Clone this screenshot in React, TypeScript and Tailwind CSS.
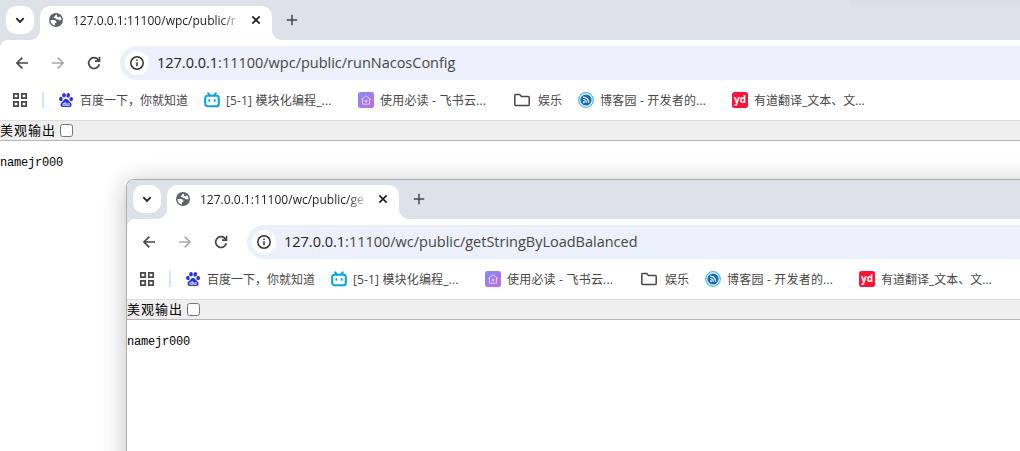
import type { ReactNode } from 'react';

interface BrowserWindowProps {
  title: string;
  path: string;
}

const GlobeIcon = () => (
  <svg className="h-4 w-4 shrink-0" viewBox="0 0 16 16">
    <circle cx="8" cy="8" r="7" fill="#5f6368" />
    <path
      d="M8.300 2.600C7 3 7.500 4 6.500 4.400c-.8.3-.9 1.300-.2 1.700.9.500 1.500 0 2 .9.500.9 2.100.2 2.900 1.100.6.700 1.500.3 2.300-.1A5.500 5.500 0 0 0 12 4.300c-.7 1-1.900 1.100-2.600.6-.6-.5-.2-1.600-1.100-2.300z"
      fill="#fff"
    />
    <path d="M2.500 8h3.400c1.500 0 2.600 1 2.600 2.300 0 .6-.5.900-1.600.9v2.200A5.500 5.500 0 0 1 2.500 8z" fill="#fff" />
  </svg>
);

const ChevronIcon = () => (
  <svg className="h-3 w-3" viewBox="0 0 12 12" fill="none" stroke="#1f1f1f" strokeWidth="1.8">
    <path d="M2.300 4.200 6 7.900l3.700-3.700" />
  </svg>
);

const CloseIcon = () => (
  <svg className="h-3 w-3" viewBox="0 0 12 12" fill="none" stroke="#1f1f1f" strokeWidth="1.7">
    <path d="m2.300 2.300 7.400 7.400M9.700 2.300 2.300 9.700" />
  </svg>
);

const PlusIcon = () => (
  <svg className="h-3 w-3" viewBox="0 0 12 12" fill="none" stroke="#474747" strokeWidth="1.500">
    <path d="M6 .8v10.400M.8 6h10.400" />
  </svg>
);

const BackIcon = () => (
  <svg className="h-4 w-4" viewBox="0 0 16 16" fill="none" stroke="#474747" strokeWidth="1.600">
    <path d="M14 8H3M8.300 2.600 2.900 8l5.400 5.400" />
  </svg>
);

const ForwardIcon = () => (
  <svg className="h-4 w-4" viewBox="0 0 16 16" fill="none" stroke="#a8a8a8" strokeWidth="1.600">
    <path d="M2 8h11M7.700 2.600 13.100 8l-5.400 5.400" />
  </svg>
);

const ReloadIcon = () => (
  <svg className="h-4 w-4" viewBox="0 0 16 16" fill="none" stroke="#474747" strokeWidth="1.700">
    <path d="M13.300 9.300A5.400 5.400 0 1 1 12.200 4.600L13.400 6" />
    <path d="M13.500 1.800V6.200H9" />
  </svg>
);

const InfoIcon = () => (
  <svg className="h-4 w-4" viewBox="0 0 16 16" fill="none" stroke="#303030" strokeWidth="1.500">
    <circle cx="8" cy="8" r="6.200" />
    <path d="M8 7.200v4M8 4.500v1.600" />
  </svg>
);

const AppsIcon = () => (
  <svg className="h-4 w-4" viewBox="0 0 16 16" fill="none" stroke="#474747" strokeWidth="1.700">
    <path d="M1.800 1.800h4.400v4.400H1.800zM9.800 1.800h4.400v4.400H9.800zM1.800 9.800h4.400v4.400H1.800zM9.800 9.800h4.400v4.400H9.800z" />
  </svg>
);

const BaiduIcon = () => (
  <svg className="h-4 w-4" viewBox="0 0 16 16">
    <g fill="#2932e1">
      <ellipse cx="2.900" cy="7" rx="1.800" ry="2.200" transform="rotate(-8 2.900 7)" />
      <ellipse cx="6" cy="3.300" rx="1.800" ry="2.300" />
      <ellipse cx="10.200" cy="3.400" rx="1.800" ry="2.300" transform="rotate(12 10.200 3.400)" />
      <ellipse cx="13.200" cy="7.100" rx="1.800" ry="2.200" />
      <path d="M8 6.700c1.600 0 2.300 1.700 3.400 2.700 1 .9 2.400 1.700 2.200 3.500-.3 2.500-3.100 2-5.600 2s-5.200.5-5.500-2c-.2-1.800 1.200-2.600 2.200-3.500C5.800 8.400 6.400 6.700 8 6.700z" />
    </g>
    <text x="4.300" y="13.600" fill="#fff" fontSize="6" fontWeight="bold" fontFamily="Liberation Sans, sans-serif">
      du
    </text>
  </svg>
);

const BilibiliIcon = () => (
  <svg className="h-4 w-4" viewBox="0 0 16 16" fill="none" stroke="#0aa5dc" strokeWidth="2.100" strokeLinecap="round">
    <rect x="1.200" y="3.700" width="13.600" height="10.500" rx="2.300" />
    <path d="m4.200 1.400 1.600 1.800M11.800 1.400l-1.600 1.800" />
    <path d="M5.300 8v.9M10.700 8v.9" strokeWidth="1.900" />
  </svg>
);

const FeishuIcon = () => (
  <svg className="h-4 w-4" viewBox="0 0 16 16" fill="none">
    <defs>
      <linearGradient id="feishu" x1="0" y1="0" x2="1" y2="1">
        <stop offset="0" stopColor="#858af8" />
        <stop offset="1" stopColor="#c06bea" />
      </linearGradient>
    </defs>
    <rect width="16" height="16" rx="2.500" fill="url(#feishu)" />
    <path d="M3.200 7.500 8 3.700l4.800 3.800M4.500 6.900v5.300h7V6.900M7.200 10V8.400h1.600V10z" stroke="#e9d9ff" strokeWidth=".9" />
  </svg>
);

const FolderIcon = () => (
  <svg className="h-4 w-4" viewBox="0 0 16 16" fill="none" stroke="#474747" strokeWidth="1.500">
    <path d="M.8 3.400c0-.5.3-.8.8-.8h4.100l1.700 1.800h7c.5 0 .8.3.8.8v7.400c0 .5-.3.800-.8.800H1.600c-.5 0-.8-.3-.8-.8z" />
  </svg>
);

const CnblogsIcon = () => (
  <svg className="h-4 w-4" viewBox="0 0 16 16" fill="none">
    <circle cx="8" cy="8" r="7.300" stroke="#46b9f3" strokeWidth="1.300" fill="#fff" />
    <circle cx="8" cy="8" r="5.600" fill="#1268bd" />
    <path d="M5.100 5.100a5.500 5.500 0 0 1 5.700 5.700M5.100 7.500a3.200 3.200 0 0 1 3.300 3.300" stroke="#fff" strokeWidth="1.200" />
    <circle cx="5.900" cy="10.200" r="1" fill="#fff" />
  </svg>
);

const YoudaoIcon = () => (
  <svg className="h-4 w-4" viewBox="0 0 16 16">
    <rect width="16" height="16" rx="2.500" fill="#fc1236" />
    <text x="2" y="11" fill="#fff" fontSize="10" fontWeight="bold" textLength="12" fontFamily="Open Sans, sans-serif">
      yd
    </text>
  </svg>
);

const bookmarks: { label: string; icon: ReactNode; width: string; text: string }[] = [
  { label: '百度一下，你就知道', icon: <BaiduIcon />, width: 'w-[146px]', text: '' },
  { label: '[5-1] 模块化编程_...', icon: <BilibiliIcon />, width: 'w-[154px]', text: 'tracking-[0.15px]' },
  { label: '使用必读 - 飞书云...', icon: <FeishuIcon />, width: 'w-[156px]', text: 'tracking-[0.2px]' },
  { label: '娱乐', icon: <FolderIcon />, width: 'w-[64px]', text: 'ml-0.5' },
  { label: '博客园 - 开发者的...', icon: <CnblogsIcon />, width: 'w-[154px]', text: 'tracking-[0.2px]' },
  { label: '有道翻译_文本、文...', icon: <YoudaoIcon />, width: 'w-[150px]', text: '' },
];

function TabStrip({ title }: { title: string }) {
  return (
    <div className="flex h-10 items-start bg-[#dde1e9] pt-1.5 pl-1.5">
      <div className="flex h-7 w-7 items-center justify-center rounded-[10px] bg-white">
        <ChevronIcon />
      </div>
      <div className="h-[34px] w-1.5" />
      <div className="relative flex h-[34px] w-[232px] items-center rounded-t-[10px] bg-white pb-1.5 pl-2">
        <div className="absolute bottom-0 -left-2.5 h-2.5 w-2.5 bg-[radial-gradient(circle_at_0_0,#dde1e9_9.500px,#fff_10.500px)]" />
        <div className="absolute -right-2.5 bottom-0 h-2.5 w-2.5 bg-[radial-gradient(circle_at_100%_0,#dde1e9_9.500px,#fff_10.500px)]" />
        <GlobeIcon />
        <span className="mt-px ml-[9px] w-[167px] text-[12px] leading-5 tracking-[0.01px] whitespace-nowrap text-[#1f1f1f] [mask-image:linear-gradient(to_right,#000_148px,transparent_170px)]">
          {title}
        </span>
        <span className="ml-2.5">
          <CloseIcon />
        </span>
      </div>
      <div className="mt-2 ml-3.5">
        <PlusIcon />
      </div>
    </div>
  );
}

function BrowserWindow({ title, path }: BrowserWindowProps) {
  return (
    <div className="h-full w-full bg-white">
      <TabStrip title={title} />
      <div className="bg-[#dde1e9]">
        <div className="flex h-[43px] items-start rounded-tl-lg bg-white pt-1.5 pl-3.5">
          <div className="flex h-[34px] w-[106px] items-center gap-5">
            <BackIcon />
            <ForwardIcon />
            <ReloadIcon />
          </div>
          <div className="flex h-[34px] flex-1 items-center rounded-l-full bg-[#ebf0fa] pl-[5px]">
            <div className="flex h-6 w-6 items-center justify-center rounded-full bg-white">
              <InfoIcon />
            </div>
            <span className="ml-2 text-[14.5px] leading-6 tracking-[-0.01px] whitespace-nowrap text-[#474747]">
              <span className="text-[#1f1f1f]">127.0.0.1</span>
              {path}
            </span>
          </div>
        </div>
      </div>
      <div className="flex h-[38px] items-center border-b border-[#dedede] pb-[3px] pl-3">
        <AppsIcon />
        <div className="mr-3.5 ml-3.5 h-4 w-0.5 bg-[#d3e3fd]" />
        {bookmarks.map((item) => (
          <div key={item.label} className={`flex shrink-0 items-center gap-1.5 ${item.width}`}>
            {item.icon}
            <span className={`pt-0.5 text-[12px] leading-4 whitespace-nowrap text-[#474747] ${item.text}`}>
              {item.label}
            </span>
          </div>
        ))}
      </div>
      <div className="flex h-5 items-center border-b border-[#b6b6b6] bg-[#efefef] font-['Noto_Sans_CJK_SC',sans-serif] text-[13px] text-black">
        <span className="pb-0.5 leading-4 tracking-[1px]">美观输出</span>
        <input type="checkbox" className="m-0 ml-1 h-[13px] w-[13px]" />
      </div>
      <pre className="pt-3.5 font-['Liberation_Mono',monospace] text-[12px] leading-4 tracking-[-0.2px] text-black">
        namejr000
      </pre>
    </div>
  );
}

export default function App() {
  return (
    <div className="relative h-[451px] w-[1020px] overflow-hidden bg-white font-['Open_Sans','Noto_Sans_CJK_SC',sans-serif]">
      <BrowserWindow title="127.0.0.1:11100/wpc/public/r" path=":11100/wpc/public/runNacosConfig" />
      <div className="absolute top-0 right-0 h-2 w-[170px] bg-linear-to-b from-[#d9dde5] to-transparent" />
      <div className="absolute top-[179px] left-[126px] h-[320px] w-[1000px] overflow-hidden rounded-tl-lg border-t border-l border-[#aeaeae] shadow-[0_4px_24px_rgba(0,0,0,0.26)]">
        <div className="-mt-px h-full">
          <BrowserWindow title="127.0.0.1:11100/wc/public/ge" path=":11100/wc/public/getStringByLoadBalanced" />
        </div>
      </div>
    </div>
  );
}
